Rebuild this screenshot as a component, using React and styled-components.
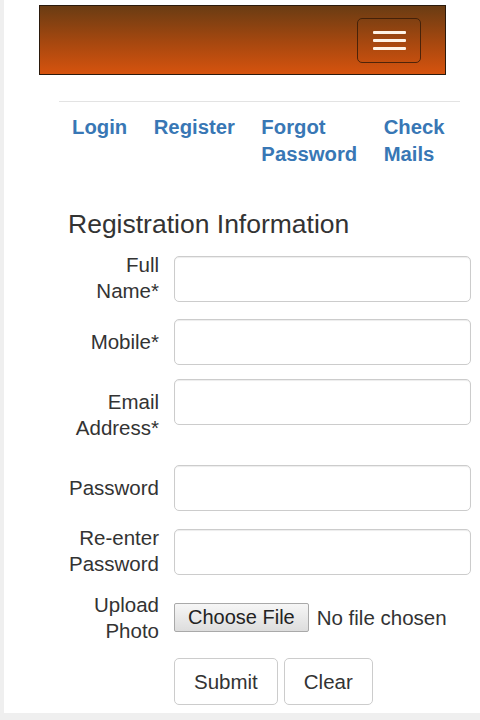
import React from 'react';
import styled, { createGlobalStyle } from 'styled-components';

const GlobalStyle = createGlobalStyle`
  html, body {
    margin: 0;
    background: #efefef;
  }
  body {
    font-family: "Liberation Sans", Arial, sans-serif;
    color: #333;
  }
`;

const Page = styled.div`
  margin-left: 4px;
  height: 713px;
  box-sizing: border-box;
  padding-top: 5px;
  background: #fff;
  overflow: hidden;
`;

const Navbar = styled.header`
  margin-left: 35px;
  width: 407px;
  height: 70px;
  box-sizing: border-box;
  border: 1px solid #2b1a0c;
  background: linear-gradient(to bottom, #6a3c13 0%, #a8480f 55%, #d6530e 100%);
  display: flex;
  align-items: center;
  justify-content: flex-end;
  padding-right: 24px;
`;

const Toggle = styled.button`
  width: 64px;
  height: 45px;
  box-sizing: border-box;
  border: 1px solid rgba(58, 28, 8, 0.85);
  border-radius: 5px;
  background: transparent;
  display: flex;
  flex-direction: column;
  align-items: center;
  justify-content: center;
  gap: 5px;
  padding: 0;
`;

const Bar = styled.span`
  display: block;
  width: 33px;
  height: 3px;
  border-radius: 1px;
  background: #fff3e6;
`;

const Content = styled.main`
  margin-left: 55px;
`;

const NavLinks = styled.nav`
  width: 401px;
  box-sizing: border-box;
  margin-top: 26px;
  border-top: 1px solid #e3e3e3;
  padding: 12px 0 0 13px;
  display: flex;
  align-items: flex-start;
  gap: 26.5px;
`;

const NavLink = styled.a`
  flex: none;
  font-weight: 700;
  font-size: 20.3px;
  line-height: 27px;
  color: #3877b5;
  text-decoration: none;
  ${p => p.$stack && 'width: min-content;'}
`;

const Heading = styled.h2`
  margin: 41px 0 13px 9px;
  font-size: 26.5px;
  font-weight: 400;
  line-height: 30px;
  color: #333;
`;

const Row = styled.div`
  display: flex;
  align-items: flex-start;
  gap: 15px;
  margin-bottom: ${p => p.$mb ?? 14}px;
`;

const Label = styled.label`
  flex: none;
  width: 100px;
  box-sizing: border-box;
  padding-left: 5px;
  margin-top: ${p => p.$top || 0}px;
  text-align: right;
  font-size: 20.5px;
  line-height: 26px;
  color: #333;
`;

const Input = styled.input`
  flex: none;
  width: 297px;
  height: 46px;
  box-sizing: border-box;
  margin: ${p => p.$top || 0}px 0 0;
  padding: 6px 12px;
  border: 1px solid #ccc;
  border-radius: 5px;
  box-shadow: inset 0 1px 1px rgba(0, 0, 0, 0.075);
  font: inherit;
  font-size: 18px;
  background: #fff;
`;

const FilePicker = styled.div`
  display: flex;
  align-items: center;
  margin-top: ${p => p.$top || 0}px;
`;

const FileButton = styled.button`
  height: 29px;
  padding: 0 13px;
  box-sizing: border-box;
  border: 1px solid #a9a9a9;
  border-radius: 2px;
  background: linear-gradient(to bottom, #f6f6f6, #dddddd);
  font-family: inherit;
  font-size: 20px;
  color: #222;
`;

const FileName = styled.span`
  margin-left: 8px;
  font-size: 20.5px;
  color: #333;
`;

const Actions = styled.div`
  display: flex;
  gap: 6px;
  padding-left: 115px;
`;

const Button = styled.button`
  height: 47px;
  padding: 0 19px;
  box-sizing: border-box;
  border: 1px solid #ccc;
  border-radius: 5px;
  background: #fff;
  font-family: inherit;
  font-size: 20.5px;
  color: #333;
`;

const App = () => {
  return (
    <>
      <GlobalStyle />
      <Page>
        <Navbar>
          <Toggle aria-label="Toggle navigation">
            <Bar />
            <Bar />
            <Bar />
          </Toggle>
        </Navbar>
        <Content>
          <NavLinks>
            <NavLink href="#">Login</NavLink>
            <NavLink href="#">Register</NavLink>
            <NavLink href="#" $stack>Forgot Password</NavLink>
            <NavLink href="#" $stack>Check Mails</NavLink>
          </NavLinks>

          <Heading>Registration Information</Heading>

          <form>
            <Row $mb={15}>
              <Label>Full Name*</Label>
              <Input type="text" $top={4} />
            </Row>
            <Row>
              <Label $top={10}>Mobile*</Label>
              <Input type="text" />
            </Row>
            <Row $mb={24}>
              <Label $top={10}>Email Address*</Label>
              <Input type="email" />
            </Row>
            <Row>
              <Label $top={10}>Password</Label>
              <Input type="password" />
            </Row>
            <Row $mb={15}>
              <Label>Re-enter Password</Label>
              <Input type="password" $top={4} />
            </Row>
            <Row>
              <Label>Upload Photo</Label>
              <FilePicker $top={11}>
                <FileButton type="button">Choose File</FileButton>
                <FileName>No file chosen</FileName>
              </FilePicker>
            </Row>
            <Actions>
              <Button type="submit">Submit</Button>
              <Button type="reset">Clear</Button>
            </Actions>
          </form>
        </Content>
      </Page>
    </>
  );
};

export default App;
